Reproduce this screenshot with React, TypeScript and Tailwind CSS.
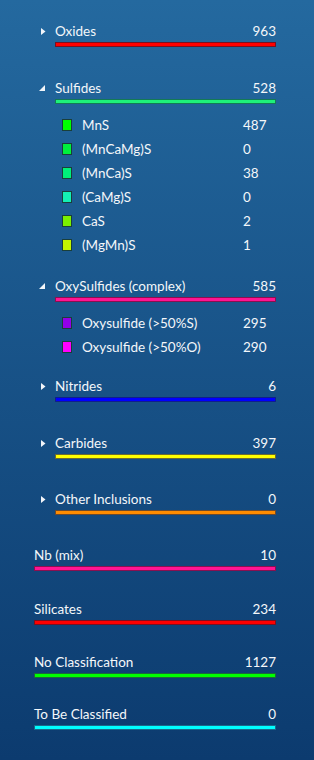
import React from "react";

type Sub = { name: string; count: number; color: string };
type Group = {
  name: string;
  count: number;
  bar: string;
  border: string;
  toggle?: "open" | "closed";
  subs?: Sub[];
  mt: string;
};

const groups: Group[] = [
  { name: "Oxides", count: 963, bar: "bg-[#ff0000]", border: "border-[#7a1020]", toggle: "closed", mt: "mt-[23px]" },
  {
    name: "Sulfides",
    count: 528,
    bar: "bg-[#1ef07a]",
    border: "border-[#137a55]",
    toggle: "open",
    mt: "mt-[33px]",
    subs: [
      { name: "MnS", count: 487, color: "bg-[#00ff00]" },
      { name: "(MnCaMg)S", count: 0, color: "bg-[#00f03c]" },
      { name: "(MnCa)S", count: 38, color: "bg-[#00f07a]" },
      { name: "(CaMg)S", count: 0, color: "bg-[#14f0b4]" },
      { name: "CaS", count: 2, color: "bg-[#7af000]" },
      { name: "(MgMn)S", count: 1, color: "bg-[#c2f500]" },
    ],
  },
  {
    name: "OxySulfides (complex)",
    count: 585,
    bar: "bg-[#ff1493]",
    border: "border-[#8a1050]",
    toggle: "open",
    mt: "mt-[21px]",
    subs: [
      { name: "Oxysulfide (>50%S)", count: 295, color: "bg-[#9400e8]" },
      { name: "Oxysulfide (>50%O)", count: 290, color: "bg-[#ff00ff]" },
    ],
  },
  { name: "Nitrides", count: 6, bar: "bg-[#0000ff]", border: "border-[#10208a]", toggle: "closed", mt: "mt-[19px]" },
  { name: "Carbides", count: 397, bar: "bg-[#ffff00]", border: "border-[#6a6a30]", toggle: "closed", mt: "mt-[33px]" },
  { name: "Other Inclusions", count: 0, bar: "bg-[#ff8c00]", border: "border-[#6a4a30]", toggle: "closed", mt: "mt-[32px]" },
  { name: "Nb (mix)", count: 10, bar: "bg-[#ff1493]", border: "border-[#8a1050]", mt: "mt-[32px]" },
  { name: "Silicates", count: 234, bar: "bg-[#ff0000]", border: "border-[#7a1020]", mt: "mt-[30px]" },
  { name: "No Classification", count: 1127, bar: "bg-[#00ff00]", border: "border-[#1a6a3a]", mt: "mt-[29px]" },
  { name: "To Be Classified", count: 0, bar: "bg-[#00ffff]", border: "border-[#1a6a8a]", mt: "mt-[28px]" },
];

function Toggle({ kind }: { kind: "open" | "closed" }) {
  if (kind === "closed") {
    return (
      <svg width="7" height="9" viewBox="0 0 7 9" className="block">
        <path d="M1 1 L5.5 4.5 L1 8 Z" fill="#f2f5f9" />
      </svg>
    );
  }
  return (
    <svg width="8" height="8" viewBox="0 0 8 8" className="block">
      <path d="M7 1 L7 7 L1 7 Z" fill="#f2f5f9" />
    </svg>
  );
}

export default function App() {
  return (
    <div
      className="w-[314px] h-[760px] overflow-hidden bg-gradient-to-b from-[#24699f] to-[#0c3b6f] text-[#f4f7fa]"
      style={{ fontFamily: 'Lato, "Noto Sans", sans-serif' }}
    >
      <div className="flex flex-col pl-[34px] pr-[38px]">
        {groups.map((g) => {
          const indent = g.toggle ? "pl-[21px]" : "";
          return (
            <div key={g.name} className={`flex flex-col ${g.mt}`}>
              <div className="relative">
                {g.toggle && (
                  <div
                    className={
                      g.toggle === "open"
                        ? "absolute left-[4px] top-[4px]"
                        : "absolute left-[6px] top-[4px]"
                    }
                  >
                    <Toggle kind={g.toggle} />
                  </div>
                )}
                <div className={`${indent}`}>
                  <div className="flex items-center justify-between h-[17px] text-[13.5px] leading-[17px]">
                    <span>{g.name}</span>
                    <span>{g.count}</span>
                  </div>
                  <div className={`mt-[2px] h-[5px] border ${g.border} ${g.bar}`} />
                </div>
              </div>
              {g.subs && (
                <div className="flex flex-col mt-[9px] pl-[28px]">
                  {g.subs.map((s) => (
                    <div key={s.name} className="flex items-center h-[24px] text-[13.5px]">
                      <div className={`w-[10px] h-[12px] border border-[#1a3f3a] ${s.color}`} />
                      <span className="ml-[10px] w-[161px]">{s.name}</span>
                      <span>{s.count}</span>
                    </div>
                  ))}
                </div>
              )}
            </div>
          );
        })}
      </div>
    </div>
  );
}
